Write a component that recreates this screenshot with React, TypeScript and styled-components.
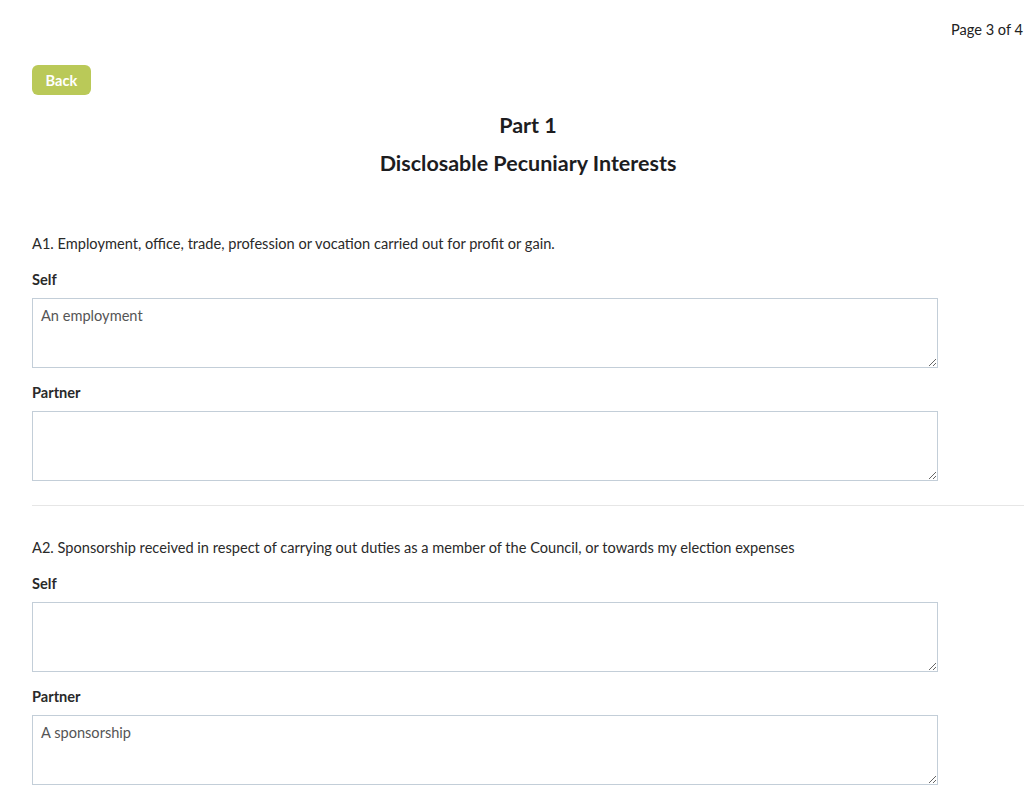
import React from "react";
import styled, {createGlobalStyle} from "styled-components";

const GlobalStyle = createGlobalStyle`
  html, body {
    margin: 0;
    padding: 0;
    background: #ffffff;
  }

  body {
    font-family: "Lato", "Noto Sans", sans-serif;
    color: #222222;
  }
`;

const Page = styled.div`
  width: 992px;
  margin-left: 32px;
  padding-top: 20px;
`;

const PageCounter = styled.div`
  text-align: right;
  margin-right: 1px;
  font-size: 14.6px;
  line-height: 20px;
  color: #222222;
`;

const BackButton = styled.button`
  display: block;
  margin-top: 25px;
  height: 30px;
  padding: 0 13.5px;
  border: none;
  border-radius: 6px;
  background: #bac958;
  color: #ffffff;
  font-family: inherit;
  font-size: 14.6px;
  font-weight: 700;
  cursor: pointer;
`;

const Header = styled.header`
  margin-bottom: 26px;
`;

const Title = styled.h2<{ $gap: number }>`
  margin: ${p => p.$gap}px 0 0 0;
  text-align: center;
  font-size: 21.5px;
  line-height: 26px;
  font-weight: 700;
  color: #1d1d1f;
`;

const Section = styled.section`
  padding-top: 32px;
  padding-bottom: 24px;
  border-bottom: 1px solid #e6e6e6;

  &:last-child {
    border-bottom: none;
  }
`;

const Question = styled.p`
  margin: 0 0 16px 0;
  font-size: 14.6px;
  line-height: 20px;
  color: #2a2a2a;
`;

const Label = styled.label`
  display: block;
  margin: 0 0 8px 0;
  font-size: 14.6px;
  line-height: 20px;
  font-weight: 700;
  color: #2a2a2a;
`;

const Field = styled.textarea`
  display: block;
  box-sizing: border-box;
  width: 906px;
  height: 70px;
  margin: 0 0 15px 0;
  padding: 7px 8px;
  border: 1px solid #c3ced8;
  border-radius: 0;
  font-family: inherit;
  font-size: 14.6px;
  line-height: 20px;
  color: #555555;
  background: #ffffff;

  &:last-child {
    margin-bottom: 0;
  }
`;

type Question = {
    text: string
    self: string
    partner: string
}

const questions: Question[] = [
    {
        text: "A1. Employment, office, trade, profession or vocation carried out for profit or gain.",
        self: "An employment",
        partner: ""
    },
    {
        text: "A2. Sponsorship received in respect of carrying out duties as a member of the Council, or towards my election expenses",
        self: "",
        partner: "A sponsorship"
    }
];

export default function App() {
    return (
        <>
            <GlobalStyle/>
            <Page>
                <PageCounter>Page 3 of 4</PageCounter>
                <BackButton>Back</BackButton>
                <Header>
                    <Title $gap={17}>Part 1</Title>
                    <Title $gap={12}>Disclosable Pecuniary Interests</Title>
                </Header>

                {questions.map((q, i) => (
                    <Section key={i}>
                        <Question>{q.text}</Question>
                        <Label>Self</Label>
                        <Field defaultValue={q.self}/>
                        <Label>Partner</Label>
                        <Field defaultValue={q.partner}/>
                    </Section>
                ))}
            </Page>
        </>
    );
}
